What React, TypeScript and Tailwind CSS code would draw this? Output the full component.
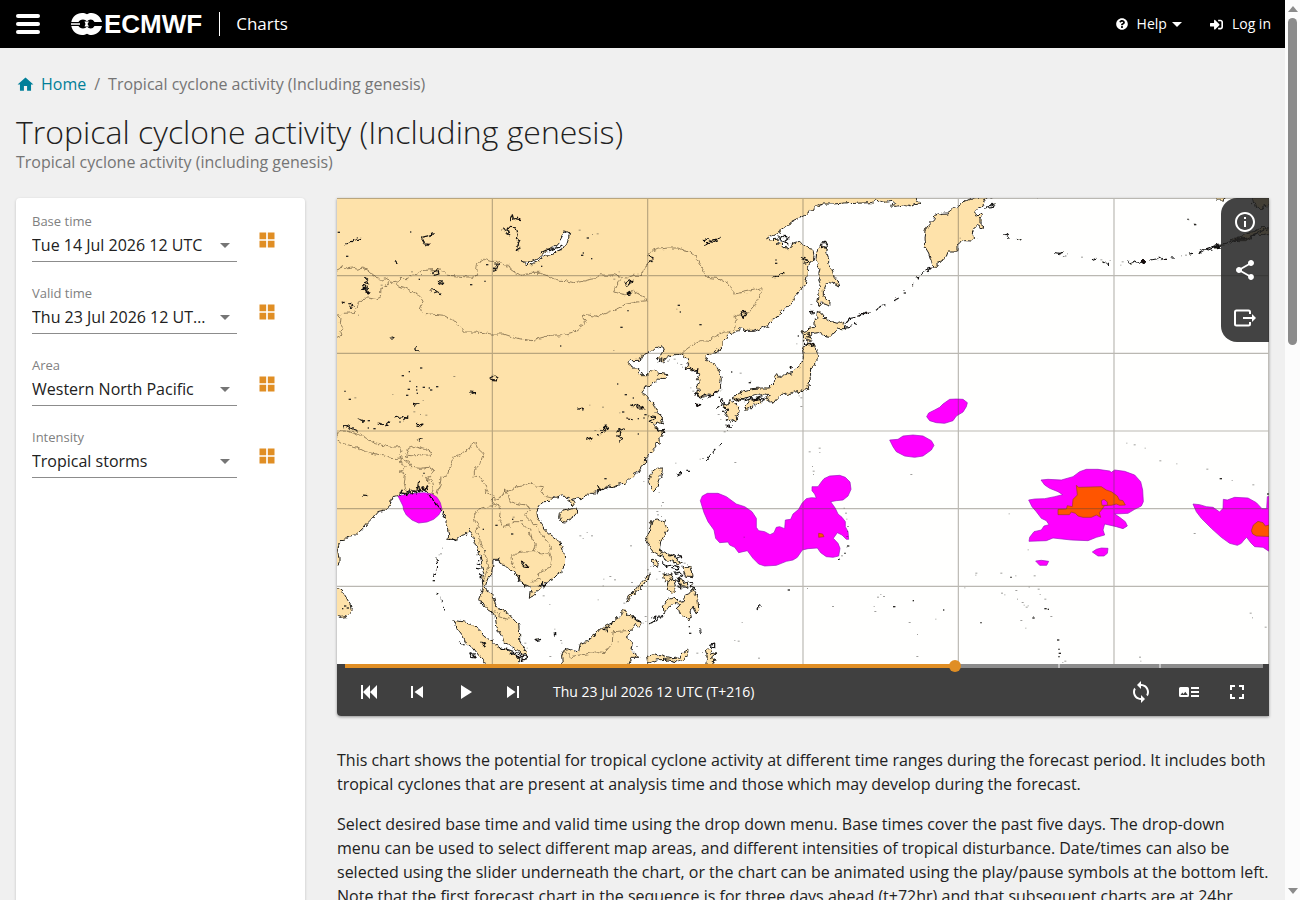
import React from "react";
import { FaQuestionCircle, FaSignInAlt } from "react-icons/fa";
import {
  MdArrowDropDown,
  MdFullscreen,
  MdHome,
  MdInfoOutline,
  MdLoop,
  MdPlayArrow,
  MdShare,
  MdSkipNext,
  MdSkipPrevious,
} from "react-icons/md";

/* ---------- Map geometry ---------- */

// The chart is stored in sheets; each sheet has its own origin on a 2796 x 1398 canvas.
type Sheet = [number, number];
const A: Sheet = [0, 0];
const B: Sheet = [933, 0];
const C: Sheet = [0, 696];
const D: Sheet = [933, 696];
const E: Sheet = [1863, 546];
const F: Sheet = [1863, -24];
const G: Sheet = [2229, -594];

const on = ([dx, dy]: Sheet, points: string) =>
  points
    .trim()
    .split(/\s+/)
    .map((pair) => {
      const [x, y] = pair.split(",").map(Number);
      return `${x + dx},${y + dy}`;
    })
    .join(" ");

const mainland = [
  on(B, "800,-20 806,8 818,15 805,20 795,18 790,24 770,20 745,25 727,24 740,16 735,10 705,13 692,8 680,6 672,14 640,15 605,17 600,14 560,18 525,18 512,22 500,32 485,40 470,52 450,62 430,72 415,87 398,98 370,112 355,120 365,126 385,124 392,128 386,140 398,136 405,146 415,145 420,152 432,150 434,136 445,132 458,136 475,145 485,155 495,157 498,172 497,186 488,190 480,207 477,235 472,262 462,268 455,280 440,297 432,312 420,325 400,340 388,357 375,365 362,380 345,388 320,400 300,400 288,393 280,390 272,398 262,400 255,410 248,404 238,412 232,422 225,430 225,443 215,455 200,465 180,470 173,477 178,488 195,497 208,510 216,525 220,545 217,560 218,575 205,583 195,590 180,588 170,596 155,600 150,590 143,588 146,575 152,580 147,560 158,552 148,545 155,530 145,515 130,520 125,510 114,514 112,505 122,500 118,485 110,475 100,466 90,470 75,470 55,482 40,490 42,482 30,492 35,480 25,482 38,470 45,465 49,455 45,447 35,445 20,450 10,460 0,463"),
  on(A, "925,465 915,470 915,482 905,487 880,488 873,497 880,502 885,510 905,510 905,522 915,530 930,530"),
  on(B, "5,520 20,517 30,525 45,528 60,530 57,540 45,542 35,540 25,550 15,555 10,562 0,563"),
  on(A, "920,570 913,578 918,590 930,594"),
  on(B, "5,605 13,612 20,625 25,642 38,652 44,660 38,668 44,678 30,672 10,680 25,685 32,695 45,695 48,703"),
  on(D, "40,12 42,20 33,28 34,38 25,42 20,55 15,62 8,70 0,80"),
  on(C, "926,86 925,102 912,112 908,124 895,130 890,140 875,146 862,160 845,162 830,170 815,168 810,178 795,178 785,186 780,180 772,190 760,190 752,198 740,200 732,206 720,204 708,208 714,218 708,228 700,225 702,215 692,208 697,202 680,202 670,196 655,202 645,205 640,214 620,215 612,222 605,232 600,245 602,262 615,282 625,300 638,312 660,328 668,340 675,350 680,365 683,380 682,410 675,425 660,435 650,445 632,452 620,460 608,478 598,485 590,497 580,502 582,485 578,470 565,464 555,460 545,447 535,432 520,418 505,408 488,402 486,388 468,388 467,410 464,430 455,440 450,452 445,470 448,482 462,488 468,500 475,520 480,535 495,540 508,546 520,558 535,574 545,584 548,610 548,632 556,648 564,660 570,675 555,672 542,660 528,655 515,642 500,636 495,620 485,605 478,585 475,560 465,545 455,542 445,530 438,518 428,515 425,508 432,490 438,470 436,450 440,430 434,410 434,395 430,380 424,360 415,340 408,320 400,306 398,298 392,308 385,314 372,318 362,330 345,328 332,328 338,318 335,300 330,280 322,265 326,255 315,240 300,235 292,220 280,205 275,190 265,182 262,174 256,186 248,176 240,188 232,184 222,192 215,186 205,194 195,188 188,196 178,198 165,200 160,225 145,240 125,245 110,262 95,275 75,298 55,315 30,320 25,330 10,332 5,345 2,360 6,385 6,402 -10,420"),
  "-40,1100 -40,-40 1740,-40",
].join(" ");

const islands = [
  on(C, "-8,475 5,478 15,482 25,498 35,515 40,525 43,542 38,553 28,560 12,562 -8,556"),
  on(C, "670,250 676,243 690,240 705,236 720,238 718,250 708,262 700,272 685,276 672,273 668,262"),
  on(C, "350,568 358,572 375,575 405,580 418,592 430,602 440,618 450,625 465,632 480,646 495,655 510,660 530,672 545,680 545,720 452,712 440,692 425,676 410,655 395,645 385,635 375,615 362,598"),
  on(C, "682,715 676,700 674,675 680,662 690,656 708,662 725,665 730,640 750,635 765,622 778,612 788,598 800,592 825,578 838,568 850,552 862,540 872,555 885,558 890,568 915,580 905,590 895,584 885,600 872,602 882,612 868,620 878,632 885,645 882,660 895,672 905,682 885,682 880,692 872,712"),
  on(C, "865,515 875,498 890,485 905,465 925,445 940,432 938,442 925,455 908,478 885,498 868,518"),
  on(D, "20,185 10,175 2,160 5,145 12,125 25,115 42,114 43,125 38,140 32,155 25,172"),
  on(D, "12,270 28,267 40,272 50,270 52,282 57,300 48,318 38,335 35,355 42,372 50,366 60,374 72,370 80,382 92,385 90,394 100,398 88,404 75,394 62,390 55,394 46,378 35,376 22,368 12,362 5,350 -8,330 0,315 5,300"),
  on(D, "10,388 25,390 34,402 30,415 18,408"),
  on(D, "45,430 58,436 72,432 68,450 52,455"),
  on(D, "60,455 72,448 85,450 78,464 82,485 70,490 56,472"),
  on(D, "90,440 102,448 108,460 118,456 120,475 106,470 96,462"),
  on(D, "105,410 125,410 130,425 132,440 118,438 115,445 108,428"),
  on(D, "92,515 105,512 112,495 122,492 134,478 145,495 150,512 152,535 145,552 138,540 136,528 126,545 130,562 122,573 110,560 97,555 92,535 90,522 75,520 65,532 52,542 48,552 46,530 58,510 78,502 85,508"),
  on(D, "-4,680 25,672 45,680 70,686 95,684 105,668 118,660 122,664 108,690 92,696 50,688 25,690 0,702"),
  on(D, "172,710 178,680 172,660 180,652 190,660 185,672 205,668 190,682 205,690 192,692 202,710"),
  on(B, "478,436 500,438 502,450 510,462 511,480 500,492 500,502 488,510 487,525 490,545 480,555 482,572 465,582 458,575 450,588 438,578 430,590 415,585 400,590 388,600 375,616 362,608 355,600 364,590 350,588 340,592 320,590 300,598 288,600 275,605 260,606 252,600 270,590 290,578 310,572 340,570 365,570 372,558 384,545 380,535 388,525 395,538 412,530 430,524 445,512 460,498 466,480 464,455 470,445"),
  on(B, "288,625 300,612 318,606 332,600 340,612 328,622 318,616 305,632 292,634"),
  on(B, "225,615 240,622 245,608 260,615 275,628 272,645 265,655 266,668 255,672 248,662 238,668 240,650 232,645 240,635 228,630"),
  on(B, "508,340 518,345 530,360 548,370 568,376 590,370 588,380 592,392 570,392 558,402 545,418 530,415 515,404 495,406 485,412 490,425 485,432 475,424 466,430 467,412 462,402 475,398 480,392 500,388 497,375 506,362"),
  on(B, "520,142 530,150 538,152 536,165 542,180 542,195 552,215 558,235 570,250 575,264 560,255 545,250 532,262 526,275 526,292 535,305 546,312 545,324 530,318 520,310 514,326 508,318 512,298 514,275 518,250 512,235 516,210 503,188 506,165 510,152"),
  [
    on(B, "855,208 850,190 842,165 830,145 828,120 832,95 842,80 858,65 860,52 880,46 900,45 915,35 930,26"),
    on(F, "20,35 40,25 70,20 85,4 86,24 78,35 75,46 60,55 50,66 54,76 66,72 77,76 66,84 66,98 78,108 70,114 58,106 48,115 42,128 50,145 40,153 20,152 8,156 0,162"),
    on(B, "930,158 918,162 900,162 895,175 885,180 882,192 870,196 862,206"),
  ].join(" "),
  on(G, "500,575 515,596 518,612 525,608 530,625 545,626 552,616 560,622 575,612 575,575"),
  on(G, "402,590 412,600 428,600 438,592"),
  on(G, "450,720 470,712 490,708 500,698 525,694 545,682 570,684 570,700 552,704 530,702 515,708 500,722 480,722"),
];

const lakes = [
  on(A, "552,191 575,194 592,187 610,178 625,162 645,150 660,140 672,122 682,102 690,98 698,102 695,118 688,140 678,155 665,156 650,168 632,172 615,180 600,192 580,200 565,199"),
];

const borders = [
  on(A, "0,216 8,212 15,203 30,212 48,210 62,214 78,210 92,218 105,230 118,240 135,246 150,240 158,250 170,254 182,252 195,240 210,242 225,232 240,228 255,218 275,216 300,214 320,220 335,232 358,234 380,236 410,238 422,232 416,215 418,200 432,188 442,184 460,190 480,190 500,200 515,202 520,214 535,224 555,232 580,226 610,226 640,236 660,246 685,248 710,254 735,250 750,246 775,242 790,230 805,232 835,230 850,236 870,240 890,232 912,232 925,205 940,185"),
  on(A, "175,256 185,264 205,270 225,280 245,290 258,310 250,330 255,346 285,348 320,352 345,366 358,372 370,388 382,402 410,402 440,404 465,408 500,408 530,418 560,424 585,428 610,420 640,412 680,410 710,402 725,390 745,376 735,360 738,348 760,352 785,356 800,348 820,340 845,330 860,320 890,314 910,310 930,308 925,298 905,288 890,280 865,290 830,282 840,260 850,240"),
  on(A, "0,348 20,346 50,344 60,330 65,312 72,302 95,300 115,304 130,298 132,270 150,262 158,250"),
  on(A, "2,350 12,360 10,378 18,390 8,400 12,412 0,418"),
  on(B, "-2,170 15,158 35,153 60,150 90,150 108,158 125,162 142,175 152,195 162,210 178,238 195,240 215,242 240,256 250,275 262,288 290,282 320,276 335,270 343,280 335,292 325,310 315,330 300,346 285,345 268,350 258,356 263,375 260,390 245,402 228,402 215,410 195,418 182,430 160,428 140,438 120,450 102,466"),
  on(C, "-4,25 10,0 25,0 45,8 70,15 85,25 115,38 135,45 160,52 190,50 195,60 188,72 195,84 165,86 150,80 115,72 85,65 60,52 35,45 15,40 -4,25"),
  on(C, "205,75 215,55 235,48 265,55 280,65 280,76 255,74 230,78 205,75"),
  on(C, "195,84 190,100 208,112 188,122 205,135 202,160 208,185"),
  on(C, "195,84 215,95 225,112 250,115 275,112 288,120 280,135 268,140 278,160 272,150 285,150 290,168 285,188 295,205"),
  on(C, "300,190 310,160 312,142 328,142 335,120 345,100 352,82 375,70 395,60 405,40 415,38 425,58 438,70 432,100 412,120 412,138 435,142 440,160 452,170 445,185 470,200"),
  on(C, "470,200 480,208 495,198 505,180 518,186 540,170 560,168 585,160 595,168 622,170 615,185 628,200 645,204"),
  on(C, "470,200 468,225 450,232 425,240 410,250 415,275 425,290 415,305 428,320 430,345 440,362 448,385 455,410 450,430 440,452"),
  on(C, "470,225 490,232 492,255 488,275 495,290 515,285 530,275 555,275 562,288 578,300 585,325 598,345 590,365 560,366 535,370 522,382 525,402 535,415"),
  on(C, "505,180 515,200 520,215 545,222 570,225 580,240 560,252 575,268 600,290 612,310 625,325 640,350 638,368 610,372 590,365"),
  on(C, "638,368 645,390 640,412 615,425 602,435 610,448 590,450 585,458"),
  on(C, "680,662 700,680 722,676 750,672 780,665 805,668 815,650 826,640 828,605 870,602"),
  on(C, "470,545 488,552 485,560 510,568 518,560"),
];

const squiggles = [
  // lakes and reservoirs
  on(A, "28,138 45,130 60,124 76,121"),
  on(A, "293,107 278,112 255,118 254,126 265,130 262,138 274,138 268,144"),
  on(A, "85,240 92,246 82,250 95,256 80,260 88,268 76,276 92,272 88,280 100,286 85,282"),
  on(A, "290,218 302,216 306,228 292,232 286,224 290,218"),
  on(A, "472,198 484,198 478,216 470,220 474,208"),
  on(A, "518,70 526,50 530,64 545,56 538,66 550,68"),
  on(A, "496,96 512,90 506,104 518,110 514,98 508,94 522,88 538,90 542,104 538,120 546,128 540,140 550,148 544,158 538,150"),
  on(A, "610,165 628,156 638,158 650,152 662,148 676,142 672,152 664,158"),
  on(A, "863,258 875,250 885,246 880,258 868,264 863,258"),
  on(A, "870,288 880,280 884,286"),
  on(A, "32,318 45,316 48,326 38,328 32,318"),
  on(A, "14,312 26,314"),
  on(A, "280,282 288,272 298,278 290,284 306,280 312,288"),
  on(A, "300,250 320,252 314,258 304,256"),
  on(A, "158,420 172,420 164,416"),
  on(A, "235,448 243,462"),
  on(A, "458,538 468,532 480,540 478,546 462,544 458,538"),
  on(A, "396,582 416,584 404,586"),
  on(A, "228,616 244,618 232,622"),
  on(A, "65,662 80,668 76,672"),
  on(A, "125,675 138,678 132,682"),
  on(A, "145,684 158,672 152,680"),
  on(A, "172,660 195,656 208,660 200,668 214,656"),
  on(A, "240,680 255,678 246,686 238,684"),
  on(A, "20,688 34,680 40,690 62,700"),
  on(A, "882,628 898,618 908,624 918,630 900,630 905,622"),
  on(A, "790,696 805,684 818,692 798,698 808,688"),
  on(A, "840,700 864,690"),
  on(A, "868,660 884,662"),
  on(A, "724,634 736,630 734,638"),
  on(A, "174,190 182,200"),
  on(B, "165,128 178,122 188,128 200,124 214,124 195,132 178,134 170,142 184,134"),
  on(B, "375,240 388,236 398,228 406,226"),
  on(B, "276,344 290,340 298,348 286,358 278,350 276,344"),
  on(B, "0,172 15,176 14,186 0,192"),
  on(B, "386,112 400,120 410,112 425,118 412,128 420,138 400,132 395,120"),
  on(B, "520,132 530,130 538,145 528,150 518,148 522,138"),
  on(B, "456,180 470,186 480,190 468,196"),
  on(B, "254,605 275,600 290,606 305,598 322,602 340,596 352,602 330,606 310,604 290,612"),
  on(B, "205,632 218,620 222,605 232,618 226,628 238,634 230,642"),
  on(B, "140,596 150,586 158,600 170,590 182,598 196,588 206,580 196,592 180,594"),
  on(B, "110,512 125,508 138,518 150,512 146,526 156,524"),
  on(B, "466,412 478,404 486,412 478,418 490,422"),
  on(B, "468,436 482,440 496,436 498,444 484,442"),
  on(B, "2,660 12,654 22,656 14,664 4,670 12,676"),
  on(B, "20,690 35,698 50,694 40,702 52,706"),
  on(B, "232,684 250,688 245,680"),
  on(B, "142,618 158,620 150,624 142,618"),
  on(B, "592,378 606,362 622,358"),
  on(B, "628,352 650,344 664,342 644,350"),
  on(B, "588,388 610,384"),
  on(B, "618,380 626,376"),
  on(B, "684,334 700,324 712,320"),
  on(B, "738,308 752,300"),
  on(B, "790,262 800,258"),
  on(B, "800,240 815,238 810,244"),
  on(B, "820,228 836,214 850,210 840,222"),
  on(B, "425,512 430,506 428,516"),
  on(B, "486,340 496,344 488,346"),
  // estuaries and archipelagos
  on(C, "240,30 256,24 246,34"),
  on(C, "78,195 94,197"),
  on(C, "188,194 195,180 200,196 208,184 212,194 220,180 226,192 234,182 238,192 245,154 248,186 256,170 262,182 268,170 272,180"),
  on(C, "276,190 284,205 290,216 302,226 312,238 322,250 318,262 328,264"),
  on(C, "552,396 564,400 572,410 560,408 552,396"),
  on(C, "300,385 302,402"),
  on(C, "299,408 298,418"),
  on(C, "296,428 292,440"),
  on(C, "300,488 304,494"),
  on(C, "310,510 316,516"),
  on(C, "320,530 324,542"),
  on(C, "418,400 430,404"),
  on(C, "420,412 432,414"),
  on(C, "426,430 434,440 428,444"),
  on(C, "366,638 384,646"),
  on(C, "398,668 410,672 418,684 404,682 398,668"),
  on(C, "430,636 446,642 438,648"),
  on(C, "485,652 510,658 530,665 520,674 545,668 556,680 540,676 560,690 575,680 558,678 550,692 570,686"),
  on(C, "596,632 612,628"),
  on(C, "650,608 660,612 654,616"),
  on(C, "605,470 615,460 624,465 632,456 622,475"),
  on(C, "535,432 548,440 545,452 560,460 568,470"),
  on(C, "745,28 765,22 758,30"),
  on(C, "778,18 786,14"),
  on(C, "794,8 806,6"),
  on(C, "838,2 850,8 842,18 855,24 845,36"),
  on(C, "332,324 345,326 358,332"),
  on(C, "780,188 790,176 782,170 800,180"),
  on(C, "800,600 815,590 808,604"),
  on(C, "885,562 898,570 910,576"),
  on(D, "176,92 184,84 188,76"),
  on(D, "194,68 202,60"),
  on(D, "212,44 222,40"),
  on(D, "86,136 100,130"),
  on(D, "118,124 126,124"),
  on(D, "62,378 78,374 88,382 98,380 92,372"),
  on(D, "40,400 55,408 75,405 95,412 88,420 70,415"),
  on(D, "88,452 96,445 90,470 102,474 94,462"),
  on(D, "80,430 95,426 104,434 92,440"),
  on(D, "124,455 134,460 130,470 142,476"),
  on(D, "0,582 15,578 30,566 48,556"),
  on(D, "10,564 24,558 18,570"),
  on(D, "330,540 338,524 340,530"),
  on(D, "155,598 158,610"),
  on(D, "188,646 200,642 200,652 188,655 188,646"),
  on(D, "576,386 574,392"),
  // island arcs
  on(F, "135,132 145,134 156,146 148,142"),
  on(F, "175,145 188,151"),
  on(F, "82,58 95,45 110,42 106,52 90,54"),
  on(F, "292,188 305,190 315,188 300,194"),
  on(F, "315,202 325,198"),
  on(F, "402,212 412,208"),
  on(F, "436,215 455,225"),
  on(F, "508,212 515,220 530,215 540,220 548,212 565,212 545,218"),
  on(F, "576,210 600,206 604,202 612,208 630,208"),
  on(F, "638,204 648,204"),
  on(F, "696,192 708,190"),
  on(F, "722,188 742,176 752,180 770,172 785,165 775,176 788,172"),
  on(G, "372,748 388,742 402,738 418,732 410,742 390,748"),
  on(G, "420,736 440,732 456,726 470,716 490,718 508,710 525,704 540,696 560,686"),
  on(G, "470,722 485,714 500,718 515,712"),
];

const markedSpecks = [
  on(A, "5,103 222,102 30,175 248,244 402,260 445,250 450,200 615,205 752,120 740,165 735,172 765,182 876,292 874,338 853,388 672,444 197,533 218,521 252,510 220,550 215,574 240,566 260,568 278,570 300,566 240,576 282,576 242,586 210,592 25,580 38,604 190,672 95,668 95,690 112,692 843,558 866,590 890,600 858,642 905,662 925,650 922,660"),
  on(B, "92,322 98,342 157,380 385,186 384,196 252,522 305,554 215,598 225,640 452,414 770,285"),
  on(C, "905,12 805,146 440,298 478,286 528,268 525,312 445,362 290,452 426,392 24,528 18,536 32,534 262,130"),
  on(D, "126,610 125,590 600,348 592,370 422,480 888,540 738,530 797,512"),
  on(E, "788,296 160,592 262,686 272,688 226,714 70,728 300,780 304,808 305,820 304,830 930,342"),
  on(G, "325,658 345,674"),
]
  .join(" ")
  .split(" ");

const faintSpecks = [
  on(A, "225,222 255,230 728,97 768,110 782,108 848,222 832,244 832,458 134,262 66,352 352,536 169,590 55,600 260,608 232,642 252,650 268,652 760,622 798,628 850,645 775,698"),
  on(B, "88,334 278,526 310,550 460,600 455,594 460,626 105,508 60,490 66,486 80,484 90,496 100,500 130,570 136,580 210,585 212,650 220,665 490,320 448,438 768,278"),
  on(C, "922,155 530,262 318,355 312,372 308,375 420,375 312,502 730,318 752,308 765,318 740,326 882,348 802,448 834,450 800,468 885,458 785,510 620,498 640,524 672,632 676,640 565,640 572,655 640,680 845,636 900,650 920,580 926,560 928,575 862,520 655,598 820,440 258,138"),
  on(D, "262,98 158,88 165,86 85,100 230,6 240,2 515,55 517,68 485,66 495,110 497,124 498,134 790,134 35,188 45,218 42,228 30,255 42,260 28,245 590,235 594,250 598,268 600,290 600,305 598,320 598,352 582,378 480,476 555,530 700,494 690,502 680,530 708,500 742,530 682,545 865,568 785,578 810,614 808,680 262,632 272,634 284,578 333,685 165,668 148,670 290,322 0,420 10,410 5,430 28,448 110,400 120,405 35,425"),
  on(E, "508,190 530,195 563,205 607,243 658,252 748,268 824,302 886,315 155,402 710,461 212,510 55,580 55,586 130,580 175,588 230,588 22,624 132,640 142,645 175,632 215,622 242,628 248,644 262,658 180,658 194,668 200,676 206,682 212,678 280,710 228,710 190,722 205,745 322,844 316,848 546,832 550,844 878,700 885,714 923,742"),
  on(F, "330,192 372,202 458,212 430,210 490,226 494,216 672,198 684,196 694,90 710,102 240,24 100,26 8,145"),
]
  .join(" ")
  .split(" ");

const stormAreas = [
  on(C, "183,198 205,194 235,190 262,188 285,192 300,202 310,218 315,238 305,255 290,268 270,276 245,279 225,270 208,255 200,240 198,228 190,212"),
  on(D, "157,212 163,198 178,190 210,190 235,200 265,222 290,230 312,245 325,265 325,292 332,302 350,305 366,314 378,308 385,292 395,290 410,296 412,270 428,268 435,252 452,238 462,220 475,206 490,203 505,204 500,192 492,182 492,170 510,170 520,156 528,146 545,138 575,136 592,142 606,156 609,178 600,198 585,210 565,212 548,215 562,235 570,252 582,262 592,275 592,290 600,305 602,328 595,328 582,315 568,308 556,325 570,340 576,355 572,378 555,382 535,380 518,368 508,354 480,356 463,360 448,382 435,390 415,394 385,406 350,408 332,402 315,385 298,362 272,368 260,352 245,345 240,336 215,338 203,325 198,300 180,275 168,248"),
  on(D, "725,30 750,28 765,18 795,15 825,18 850,32 858,46 850,60 825,78 800,82 770,78 745,65 735,50"),
  on(B, "836,656 842,645 860,636 875,628 885,618 905,604 925,603 945,604 958,614 955,626 945,642 925,654 915,668 890,676 865,674 845,668"),
  on(E, "249,300 270,298 310,300 345,290 365,275 385,268 420,268 455,273 460,277 470,270 500,274 530,285 548,305 554,330 556,365 550,378 530,388 510,400 470,402 485,412 502,425 508,438 495,446 475,440 440,432 435,450 440,465 415,472 390,482 340,480 285,474 265,482 213,484 215,472 228,455 250,450 258,438 273,434 265,422 250,415 235,395 222,380 212,360 230,357 260,356 290,350 314,344 300,335 275,325 260,315"),
  on(E, "403,516 415,508 430,504 450,505 448,520 438,528 420,528"),
  on(E, "233,543 250,541 272,544 266,556 245,556"),
  on(E, "705,372 725,374 745,380 765,382 785,396 795,385 796,358 808,360 830,352 870,354 895,368 912,386 926,386 928,350 945,345 945,520 930,512 915,502 890,500 878,488 866,472 858,480 850,490 838,496 815,490 790,472 760,445 730,415 715,395"),
];

const intenseAreas = [
  on(E, "355,316 362,322 430,320 445,330 460,335 478,348 484,360 495,362 502,375 485,376 475,372 460,376 440,376 432,388 424,398 428,412 415,405 400,412 375,412 360,408 352,400 340,396 334,404 300,404 300,388 325,387 328,377 343,380 345,358 358,345"),
  on(E, "880,452 886,435 900,424 915,428 922,438 945,432 945,470 895,468 884,462"),
  on(D, "512,310 524,312 528,320 512,322"),
];

function Specks({ points, size }: { points: string[]; size: number }) {
  return (
    <>
      {points.map((point, i) => {
        const [x, y] = point.split(",").map(Number);
        return <rect key={i} x={x - 3} y={y - 2} width={i % 2 ? size : size + 3} height={size} />;
      })}
    </>
  );
}

function ChartMap() {
  return (
    <svg viewBox="0 0 2796 1398" className="block w-full bg-[#fffffe]" role="img" aria-label="Tropical cyclone activity map">
      <defs>
        {/* Breaks up straight segments so that coasts look surveyed. */}
        <filter id="coast" x="0" y="0" width="2796" height="1398" filterUnits="userSpaceOnUse">
          <feTurbulence type="fractalNoise" baseFrequency="0.07" numOctaves="2" seed="4" result="noise" />
          <feDisplacementMap in="SourceGraphic" in2="noise" scale="16" xChannelSelector="R" yChannelSelector="G" />
        </filter>
      </defs>
      <g filter="url(#coast)">
        <g fill="#fee2aa" stroke="#22201c" strokeWidth="3" strokeLinejoin="round">
          <polygon points={mainland} />
          {islands.map((points, i) => (
            <polygon key={i} points={points} />
          ))}
        </g>
        <g fill="#fff" stroke="#22201c" strokeWidth="3">
          {lakes.map((points, i) => (
            <polygon key={i} points={points} />
          ))}
        </g>
        <g fill="none" stroke="#7f6c4c" strokeWidth="2.5">
          {borders.map((points, i) => (
            <polyline key={i} points={points} />
          ))}
        </g>
      </g>
      <g fill="#ff00ff" stroke="#9a10c0" strokeWidth="2">
        {stormAreas.map((points, i) => (
          <polygon key={i} points={points} />
        ))}
      </g>
      <g fill="#ff5500" stroke="#a03a20" strokeWidth="2">
        {intenseAreas.map((points, i) => (
          <polygon key={i} points={points} />
        ))}
      </g>
      <polygon points={on(E, "430,362 438,358 448,366 448,376 432,376")} fill="#ff00ff" stroke="#a03a20" strokeWidth="2" />
      <g fill="none" stroke="#12110f" strokeWidth="3.5" strokeLinejoin="round" filter="url(#coast)">
        {squiggles.map((points, i) => (
          <polyline key={i} points={points} />
        ))}
      </g>
      <g fill="#2b2926">
        <Specks points={markedSpecks} size={4} />
      </g>
      <g fill="#2b2926" fillOpacity="0.45">
        <Specks points={faintSpecks} size={3} />
      </g>
      <path
        d="M466 0V1398M932 0V1398M1398 0V1398M1864 0V1398M2331 0V1398M0 233H2796M0 466H2796M0 699H2796M0 932H2796M0 1165H2796M0 1H2796M2795 0V1398"
        stroke="#4a4438"
        strokeOpacity="0.38"
        strokeWidth="3.500"
      />
    </svg>
  );
}

/* ---------- Icons ---------- */

const GridIcon = () => (
  <svg viewBox="0 0 24 24" className="size-5" fill="currentColor" aria-hidden="true">
    <path d="M3 11h8V3H3zM3 21h8v-8H3zM13 21h8v-8h-8zM13 3v8h8V3z" />
  </svg>
);

const ExportIcon = () => (
  <svg viewBox="0 0 24 24" className="size-6" fill="none" stroke="currentColor" strokeWidth="2" aria-hidden="true">
    <path d="M17 8V6a1.500 1.500 0 0 0-1.500-1.500H3.500A1.500 1.500 0 0 0 2 6v12a1.500 1.500 0 0 0 1.500 1.500h12A1.500 1.500 0 0 0 17 18v-2M10 12h10" />
    <path d="M19 8l4 4-4 4z" fill="currentColor" stroke="none" />
  </svg>
);

const FirstIcon = () => (
  <svg viewBox="0 0 24 24" className="size-6" fill="currentColor" aria-hidden="true">
    <path d="M4 5h2v14H4zM13 5v14l-7-7zM20 5v14l-7-7z" />
  </svg>
);

const LegendIcon = () => (
  <svg viewBox="0 0 24 24" className="size-6" fill="currentColor" aria-hidden="true">
    <path fillRule="evenodd" d="M3.500 7h7A1.500 1.500 0 0 1 12 8.500v7a1.500 1.500 0 0 1-1.500 1.500h-7A1.500 1.500 0 0 1 2 15.500v-7A1.500 1.500 0 0 1 3.500 7zM3.500 15h7.200l-2.400-3.200-1.800 2.200-1.200-1.400z" />
    <path d="M14 7h8v2h-8zM14 11h8v2h-8zM14 15h8v2h-8z" />
  </svg>
);

const EmblemIcon = () => (
  <svg viewBox="0 0 31 22" className="h-[22px] w-[31px]" aria-hidden="true">
    <path
      fill="#fff"
      d="M11 0c2 0 3.500.4 5 1.200C17.500.4 18.500 0 20.500 0 25.500 0 29.500 3.500 31 9h-7.500c-1-1.700-2.200-2.500-3.800-2.500-1.500 0-2.700.7-3.700 2C15 7.200 13.500 6.500 12 6.500 9.800 6.500 8.300 7.600 7.500 9H.3C1.500 3.500 5.500 0 11 0zM11 22c2 0 3.500-.4 5-1.200 1.500.8 2.500 1.200 4.500 1.200 5 0 9-3.500 10.500-9h-7.500c-1 1.700-2.200 2.500-3.800 2.500-1.500 0-2.700-.7-3.700-2-1 1.300-2.500 2-4 2-2.200 0-3.700-1.100-4.500-2.500H.3C1.500 18.500 5.500 22 11 22z"
    />
    <path fill="#fff" d="M0 10.200h9v1.600H0zM13.500 8.500h4.500L16.500 11l1.500 2.500h-4.500l1-2.500z" />
  </svg>
);

/* ---------- Panels ---------- */

const filters = [
  { id: "base-time", label: "Base time", value: "Tue 14 Jul 2026 12 UTC" },
  { id: "valid-time", label: "Valid time", value: "Thu 23 Jul 2026 12 UTC (T+216)" },
  { id: "area", label: "Area", value: "Western North Pacific" },
  { id: "intensity", label: "Intensity", value: "Tropical storms" },
];

function Filter({ id, label, value }: { id: string; label: string; value: string }) {
  return (
    <div className="flex h-[72px] items-start">
      <div className="grid w-[205px] grid-cols-1 border-b border-[#8c8c8c] pb-0.5">
        <label htmlFor={id} className="text-[13px] leading-5 text-[#808080]">
          {label}
        </label>
        <div className="flex items-center">
          <select
            id={id}
            defaultValue={value}
            className="h-7 min-w-0 flex-1 appearance-none truncate bg-transparent text-base text-[#212121] outline-none"
          >
            <option>{value}</option>
          </select>
          <MdArrowDropDown className="size-6 text-[#757575]" aria-hidden="true" />
        </div>
      </div>
      <button type="button" aria-label={`Show all: ${label}`} className="mt-[19px] ml-5 flex size-5 items-center justify-center text-[#e08e24]">
        <GridIcon />
      </button>
    </div>
  );
}

function IconButton({ label, children }: { label: string; children: React.ReactNode }) {
  return (
    <button type="button" aria-label={label} className="flex size-12 items-center justify-center">
      {children}
    </button>
  );
}

function Header() {
  return (
    <header className="flex h-12 shrink-0 items-center bg-black px-4 text-white">
      <button type="button" aria-label="Menu" className="flex w-6 flex-col gap-1">
        <span className="h-1 w-full rounded-xs bg-white" />
        <span className="h-1 w-full rounded-xs bg-white" />
        <span className="h-1 w-full rounded-xs bg-white" />
      </button>
      <a href="#ecmwf" className="ml-[31px] flex items-center gap-0.5">
        <EmblemIcon />
        <span className="font-['Liberation_Sans',Arial,sans-serif] text-[26px] leading-6 font-bold">ECMWF</span>
      </a>
      <a href="#charts" className="ml-[17px] flex h-6 items-center border-l border-white pl-4 text-[17px]">
        Charts
      </a>
      <nav className="ml-auto flex items-center gap-7 text-sm">
        <button type="button" className="flex items-center gap-[9px]">
          <FaQuestionCircle className="size-3" />
          <span>Help</span>
          <svg viewBox="0 0 10 5" className="-ml-1 h-[5px] w-[10px]" fill="currentColor" aria-hidden="true">
            <path d="M0 0h10L5 5z" />
          </svg>
        </button>
        <a href="#login" className="-mr-0.5 flex items-center gap-[9px]">
          <FaSignInAlt className="size-[13px]" />
          <span>Log in</span>
        </a>
      </nav>
    </header>
  );
}

function Player() {
  return (
    <section aria-label="Chart" className="relative rounded-bl-sm shadow-[0_1px_3px_rgba(0,0,0,0.4)]">
      <ChartMap />
      <div className="absolute top-0 right-0 flex flex-col rounded-l-2xl bg-[#222222]/85 text-white">
        <IconButton label="Information">
          <MdInfoOutline className="size-6" />
        </IconButton>
        <IconButton label="Share">
          <MdShare className="size-6" />
        </IconButton>
        <IconButton label="Export">
          <ExportIcon />
        </IconButton>
      </div>
      <div className="rounded-bl-sm bg-[#404040] text-white">
        <div className="flex h-1 items-center pr-1.5 pl-2">
          <input
            type="range"
            min={72}
            max={288}
            step={24}
            defaultValue={216}
            aria-label="Forecast step"
            className="h-1 w-full appearance-none bg-[linear-gradient(to_right,#e08e24_66.8%,#8c8c8c_66.8%,#8c8c8c_77.7%,#c4c4c4_77.7%,#c4c4c4_77.85%,#8c8c8c_77.85%,#8c8c8c_88.7%,#c4c4c4_88.7%,#c4c4c4_88.85%,#8c8c8c_88.85%)] [&::-webkit-slider-thumb]:size-3 [&::-webkit-slider-thumb]:appearance-none [&::-webkit-slider-thumb]:rounded-full [&::-webkit-slider-thumb]:bg-[#e08e24]"
          />
        </div>
        <div className="flex h-12 items-center px-2">
          <IconButton label="First">
            <FirstIcon />
          </IconButton>
          <IconButton label="Previous">
            <MdSkipPrevious className="size-6" />
          </IconButton>
          <IconButton label="Play">
            <MdPlayArrow className="size-6" />
          </IconButton>
          <IconButton label="Next">
            <MdSkipNext className="size-6" />
          </IconButton>
          <span className="ml-4 flex-1 text-sm">Thu 23 Jul 2026 12 UTC (T+216)</span>
          <IconButton label="Loop">
            <MdLoop className="size-6" />
          </IconButton>
          <IconButton label="Legend">
            <LegendIcon />
          </IconButton>
          <IconButton label="Full screen">
            <MdFullscreen className="size-6" />
          </IconButton>
        </div>
      </div>
    </section>
  );
}

function ScrollRail() {
  return (
    <div aria-hidden="true" className="flex w-[15px] shrink-0 flex-col items-center bg-[#fcfcfc] py-1.5">
      <svg viewBox="0 0 10 6" className="h-1.5 w-2.5 shrink-0" fill="#8b8b8b">
        <path d="M5 0l5 6H0z" />
      </svg>
      <div className="flex w-full flex-1 justify-center pt-1.5">
        <div className="h-[37.6%] w-[9px] rounded-full bg-[#8b8b8b]" />
      </div>
      <svg viewBox="0 0 10 6" className="h-1.5 w-2.5 shrink-0" fill="#8b8b8b">
        <path d="M0 0h10L5 6z" />
      </svg>
    </div>
  );
}

export default function App() {
  return (
    <div className="flex h-screen bg-[#f0f0f0] font-['Open_Sans','Noto_Sans',sans-serif] text-[#212121]">
      <div className="flex min-w-0 flex-1 flex-col overflow-y-auto [scrollbar-width:none]">
        <Header />
        <main className="flex grow flex-col px-4 pt-6">
          <nav aria-label="Breadcrumb" className="flex h-6 items-center text-base text-[#757575]">
            <a href="#home" className="flex items-center text-[#007f99]">
              <MdHome className="mr-1.5 size-[19px]" />
              Home
            </a>
            <span className="mx-2">/</span>
            <span>Tropical cyclone activity (Including genesis)</span>
          </nav>
          <h1 className="mt-4 text-[32px] leading-10 font-light">Tropical cyclone activity (Including genesis)</h1>
          <p className="text-base leading-5 text-[#757575]">Tropical cyclone activity (including genesis)</p>
          <div className="mt-[26px] flex grow gap-8">
            <aside className="w-[289px] shrink-0 rounded-t-sm bg-white px-4 pt-[13px] shadow-[0_1px_3px_rgba(0,0,0,0.2)]">
              {filters.map((filter) => (
                <Filter key={filter.id} {...filter} />
              ))}
            </aside>
            <div className="min-w-0 flex-1">
              <Player />
              <div className="mt-8 flex flex-col gap-4 text-base leading-6">
                <p>
                  This chart shows the potential for tropical cyclone activity at different time ranges during the forecast period. It
                  includes both tropical cyclones that are present at analysis time and those which may develop during the forecast.
                </p>
                <p>
                  Select desired base time and valid time using the drop down menu. Base times cover the past five days. The drop-down
                  menu can be used to select different map areas, and different intensities of tropical disturbance. Date/times can
                  also be selected using the slider underneath the chart, or the chart can be animated using the play/pause symbols at
                  the bottom left. Note that the first forecast chart in the sequence is for three days ahead (t+72hr) and that
                  subsequent charts are at 24hr
                </p>
              </div>
            </div>
          </div>
        </main>
      </div>
      <ScrollRail />
    </div>
  );
}
